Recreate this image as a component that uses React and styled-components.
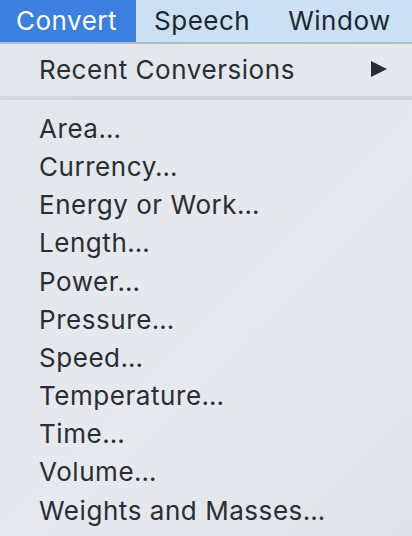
import styled, { createGlobalStyle } from 'styled-components';

const GlobalStyle = createGlobalStyle`
  html, body {
    margin: 0;
    padding: 0;
    width: 412px;
    height: 536px;
    overflow: hidden;
    background: #e4e7eb;
  }
  * {
    box-sizing: border-box;
  }
`;

const Screen = styled.div`
  width: 412px;
  height: 536px;
  display: flex;
  flex-direction: column;
  font-family: Inter, 'Liberation Sans', sans-serif;
  color: #2a2d32;
  background: linear-gradient(135deg, #e2e6eb 0%, #e6e9ed 60%, #dfe3e8 100%);
`;

const MenuBar = styled.div`
  height: 44px;
  display: flex;
  align-items: stretch;
  background: #cbe0f2;
  border-bottom: 2px solid #b4bcc6;
`;

const BarItem = styled.div`
  display: flex;
  align-items: center;
  padding: 0 ${p => (p.$active ? '19px' : '20px')} 2px ${p => (p.$active ? '16px' : '18px')};
  font-size: 26px;
  letter-spacing: 0.5px;
  color: ${p => (p.$active ? '#ffffff' : '#1c2733')};
  background: ${p => (p.$active ? '#3b7fe0' : 'transparent')};
`;

const Menu = styled.div`
  display: flex;
  flex-direction: column;
  padding-top: 6px;
`;

const Item = styled.div`
  height: 38.2px;
  display: flex;
  align-items: center;
  justify-content: space-between;
  padding: 0 25px 0 39px;
  font-size: 26px;
  letter-spacing: 0.55px;
  white-space: nowrap;
`;

const Arrow = styled.span`
  width: 0;
  height: 0;
  border-top: 8.5px solid transparent;
  border-bottom: 8.5px solid transparent;
  border-left: 16px solid #2a2d32;
`;

const Separator = styled.div`
  height: 4px;
  margin: 8px 0 9px;
  background: #cfd5dc;
`;

const conversions = [
  'Area…',
  'Currency…',
  'Energy or Work…',
  'Length…',
  'Power…',
  'Pressure…',
  'Speed…',
  'Temperature…',
  'Time…',
  'Volume…',
  'Weights and Masses…',
];

export default function App() {
  return (
    <>
      <GlobalStyle />
      <Screen>
        <MenuBar>
          <BarItem $active>Convert</BarItem>
          <BarItem>Speech</BarItem>
          <BarItem>Window</BarItem>
        </MenuBar>
        <Menu>
          <Item>
            Recent Conversions
            <Arrow />
          </Item>
          <Separator />
          {conversions.map(name => (
            <Item key={name}>{name}</Item>
          ))}
        </Menu>
      </Screen>
    </>
  );
}
